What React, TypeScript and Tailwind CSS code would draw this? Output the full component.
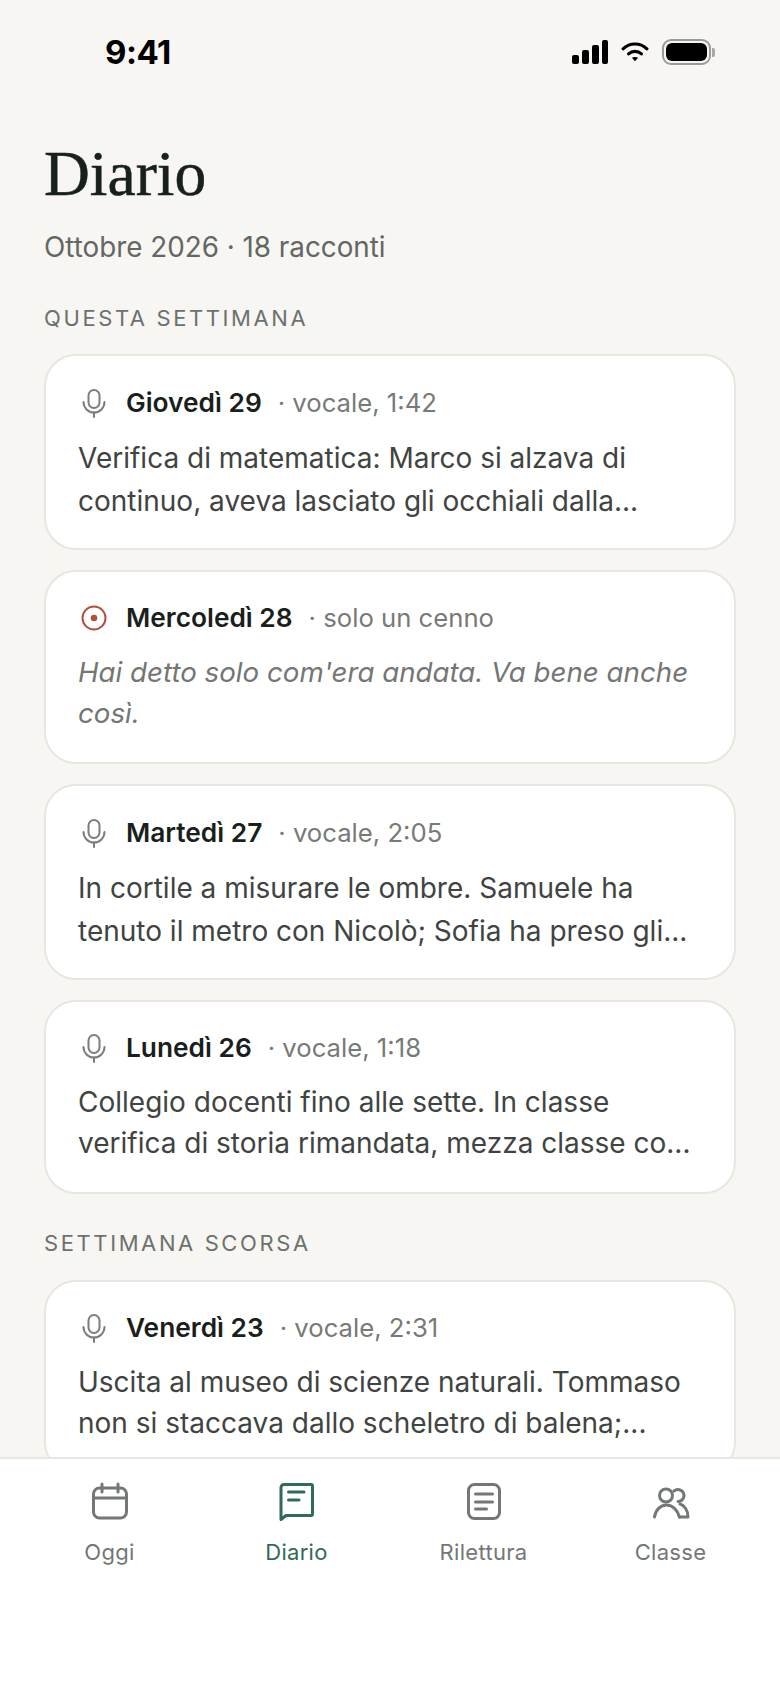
const inter = { fontFamily: 'Inter, sans-serif' };

function MicIcon() {
  return (
    <svg width="32" height="32" viewBox="0 0 32 32" fill="none" stroke="#7a7d7a" strokeWidth="2" strokeLinecap="round" strokeLinejoin="round">
      <rect x="10.5" y="3" width="11" height="18" rx="5.5" />
      <path d="M5.5 15a10.5 10.5 0 0 0 21 0" />
      <path d="M16 25.5V30" />
    </svg>
  );
}

function DotIcon() {
  return (
    <svg width="32" height="32" viewBox="0 0 32 32" fill="none">
      <circle cx="16" cy="16" r="11.5" stroke="#b0513c" strokeWidth="2" />
      <circle cx="16" cy="16" r="3.3" fill="#b0513c" />
    </svg>
  );
}

interface EntryProps {
  day: string;
  meta: string;
  lines: string[];
  nod?: boolean;
  compact?: boolean;
}

function Entry({ day, meta, lines, nod, compact }: EntryProps) {
  return (
    <div className={compact ? 'h-[194px] shrink-0 rounded-[32px] border-2 border-[#e8e6df] bg-white pl-[32px] pr-[30px] pt-[26px]' : 'h-[196px] shrink-0 rounded-[32px] border-2 border-[#e8e6df] bg-white pl-[32px] pr-[30px] pt-[27px]'}>
      <div className="flex h-[40px] items-center">
        <div className="mr-[16px] w-[32px] shrink-0">{nod ? <DotIcon /> : <MicIcon />}</div>
        <span className="text-[26.3px] font-semibold text-[#1a1f1c]">{day}</span>
        <span className="ml-[16px] text-[25.7px] text-[#777a77]">· {meta}</span>
      </div>
      <div className={nod ? 'mt-[14px] text-[27.7px] leading-[41px] italic text-[#737673]' : compact ? 'mt-[14px] text-[28px] leading-[41px] text-[#3f4441]' : 'mt-[14px] text-[28px] leading-[42.5px] text-[#3f4441]'}>
        {lines.map((line) => (
          <div key={line} className="whitespace-nowrap">{line}</div>
        ))}
      </div>
    </div>
  );
}

function NavItem({ label, active, children }: { label: string; active?: boolean; children: React.ReactNode }) {
  return (
    <div className={active ? 'flex flex-col items-center text-[#2f6b58]' : 'flex flex-col items-center text-[#737775]'}>
      <div className="h-[44px] w-[44px]">{children}</div>
      <span className="mt-[15px] text-[22px] leading-[28px] tracking-[0.3px]">{label}</span>
    </div>
  );
}

export default function App() {
  return (
    <div className="flex h-[1688px] w-[780px] flex-col overflow-hidden bg-[#f7f6f2]" style={inter}>
      <div className="flex-1 overflow-hidden">
        {/* status bar */}
        <div className="flex h-[104px] items-center justify-between pl-[105px] pr-[65px]">
          <span className="text-[33px] font-bold leading-none tracking-[-0.5px] text-black">9:41</span>
          <div className="flex items-center gap-[13px]">
            <svg width="36" height="24" viewBox="0 0 36 24" fill="black">
              <rect x="0" y="15" width="7" height="9" rx="2" />
              <rect x="10" y="10" width="7" height="14" rx="2" />
              <rect x="20" y="5" width="7" height="19" rx="2" />
              <rect x="30" y="0" width="6" height="24" rx="2" />
            </svg>
            <svg width="28" height="22" viewBox="0 0 30 24" fill="none" stroke="black" strokeWidth="3.4" strokeLinecap="round">
              <path d="M2 8.5C9.5 1.5 20.5 1.5 28 8.5" />
              <path d="M8 14c4-3.6 10-3.6 14 0" />
              <path d="M15 22l-3.4-3.6c2-1.3 4.8-1.3 6.8 0z" fill="black" stroke="none" />
            </svg>
            <div className="flex items-center">
              <div className="h-[26px] w-[49px] rounded-[9px] border-2 border-[#9a9a9a] p-[2px]">
                <div className="h-full w-full rounded-[6px] bg-black" />
              </div>
              <div className="ml-[1px] h-[9px] w-[3px] rounded-r-[2px] bg-[#a8a8a8]" />
            </div>
          </div>
        </div>

        <div className="px-[44px]">
          <h1 className="mt-[35px] text-[63.5px] leading-[70px] text-[#18201c] [-webkit-text-stroke:0.5px_#18201c]" style={{ fontFamily: '"Liberation Serif", serif' }}>Diario</h1>
          <p className="mt-[20px] text-[27.8px] leading-[36px] text-[#636763]">Ottobre 2026 · 18 racconti</p>
          <h2 className="mt-[39px] text-[22px] leading-[28px] tracking-[2.6px] text-[#6d716d]">QUESTA SETTIMANA</h2>
          <div className="mt-[22px] flex flex-col gap-[20px]">
            <Entry day="Giovedì 29" meta="vocale, 1:42" lines={['Verifica di matematica: Marco si alzava di', 'continuo, aveva lasciato gli occhiali dalla...']} />
            <Entry day="Mercoledì 28" meta="solo un cenno" nod compact lines={["Hai detto solo com'era andata. Va bene anche", 'così.']} />
            <Entry day="Martedì 27" meta="vocale, 2:05" lines={['In cortile a misurare le ombre. Samuele ha', 'tenuto il metro con Nicolò; Sofia ha preso gli...']} />
            <Entry day="Lunedì 26" meta="vocale, 1:18" compact lines={['Collegio docenti fino alle sette. In classe', 'verifica di storia rimandata, mezza classe co...']} />
          </div>
          <h2 className="mt-[35px] text-[22px] leading-[28px] tracking-[2.6px] text-[#6d716d]">SETTIMANA SCORSA</h2>
          <div className="mt-[23px]">
            <Entry day="Venerdì 23" meta="vocale, 2:31" compact lines={['Uscita al museo di scienze naturali. Tommaso', 'non si staccava dallo scheletro di balena;...']} />
          </div>
        </div>
      </div>

      {/* tab bar */}
      <nav className="grid h-[231px] shrink-0 grid-cols-4 border-t-2 border-[#e8e6df] bg-white px-[16px] pt-[20px]">
        <NavItem label="Oggi">
          <svg width="44" height="44" viewBox="0 0 44 44" fill="none" stroke="currentColor" strokeWidth="3" strokeLinecap="round">
            <rect x="5.5" y="9" width="33" height="30" rx="6" />
            <path d="M5.5 19h33M14 5v8M30 5v8" />
          </svg>
        </NavItem>
        <NavItem label="Diario" active>
          <svg width="44" height="44" viewBox="0 0 44 44" fill="none" stroke="currentColor" strokeWidth="3" strokeLinecap="round" strokeLinejoin="round">
            <path d="M9 5.5h27a1.5 1.5 0 0 1 1.5 1.5v28a1.5 1.5 0 0 1-1.5 1.5H11l-5 4V8.5a3 3 0 0 1 3-3z" />
            <path d="M13.5 13h15.5M13.5 21h10.5" />
          </svg>
        </NavItem>
        <NavItem label="Rilettura">
          <svg width="44" height="44" viewBox="0 0 44 44" fill="none" stroke="currentColor" strokeWidth="3" strokeLinecap="round">
            <rect x="6.5" y="5.5" width="31" height="34" rx="6" />
            <path d="M13.5 15h17M13.5 23h17M13.5 30h11" />
          </svg>
        </NavItem>
        <NavItem label="Classe">
          <svg width="44" height="44" viewBox="0 0 44 44" fill="none" stroke="currentColor" strokeWidth="3" strokeLinecap="round" strokeLinejoin="round">
            <circle cx="17" cy="16.5" r="6.5" />
            <path d="M5.5 38c1-7 6-12 12-12s11 5 13 12" />
            <path d="M25 12a6 6 0 1 1 4 10.5" />
            <path d="M31 25c4 1 8 6 8 13h-8.5" />
          </svg>
        </NavItem>
      </nav>
    </div>
  );
}
